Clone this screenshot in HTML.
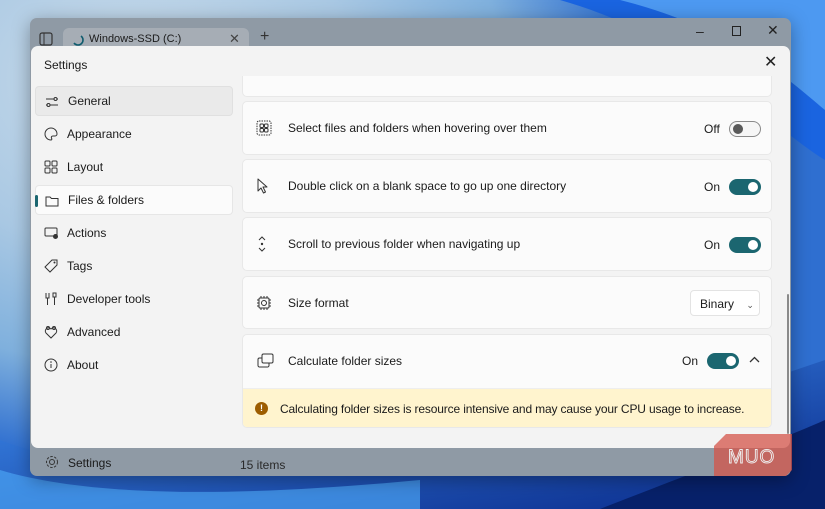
<!DOCTYPE html>
<html><head><meta charset="utf-8"><style>
*{box-sizing:border-box;margin:0;padding:0}
body{width:825px;height:509px;overflow:hidden;position:relative;font-family:"Liberation Sans",sans-serif;
background:radial-gradient(ellipse 500px 380px at 130px 80px,#c9dbea 0%,#a9c8e3 45%,#7fb0dd 75%,#2f6fd0 100%);}
.abs{position:absolute}
.win{left:30px;top:18px;width:761px;height:458px;background:#8f9aa5;border-radius:7px;overflow:hidden;box-shadow:0 4px 18px rgba(0,0,0,.35)}
.dlg{left:31px;top:46px;width:759px;height:402px;background:#f3f3f3;border-radius:7px;overflow:hidden}
.nav{position:absolute;left:4px;width:198px;height:30px;font-size:12px;color:#1b1b1b;display:flex;align-items:center;padding-left:32px;border-radius:4px}
.nav svg{position:absolute;left:9px;top:8px}
.card{position:absolute;left:211px;width:530px;background:#fbfbfb;border:1px solid #e8e8e8;border-radius:5px;font-size:12px;color:#1b1b1b;white-space:nowrap}
.lbl{position:absolute;left:45px;top:50%;transform:translateY(-50%)}
.ic{position:absolute;left:13px;top:50%;transform:translateY(-50%)}
.st{position:absolute;font-size:12px}
.tg{position:absolute;width:32px;height:16px;border-radius:8px;background:#1b6670}
.tg::after{content:"";position:absolute;right:3px;top:3px;width:10px;height:10px;border-radius:50%;background:#fff}
.tg.off{background:#f6f6f6;border:1px solid #8a8a8a}
.tg.off::after{left:3px;right:auto;top:2px;background:#5a5a5a}
</style></head><body>
<svg class="abs" style="left:0;top:0" width="825" height="509">
<defs><linearGradient id="g" x1="0" y1="0" x2="1" y2="1"><stop offset="0" stop-color="#3f8ff0"/><stop offset="1" stop-color="#0a2a8a"/></linearGradient></defs>
<path d="M560 0 C700 40 760 120 825 160 L825 0Z" fill="#1a64e0"/>
<path d="M620 0 C740 30 800 90 825 110 L825 0Z" fill="#5aa6f5" opacity=".8"/>
<path d="M0 509 L0 440 C80 470 200 480 330 470 C500 455 650 420 825 360 L825 509Z" fill="url(#g)"/>
<path d="M0 470 C100 500 260 495 420 480 L420 509 L0 509Z" fill="#4aa2f2" opacity=".7"/>
<path d="M600 509 C700 470 780 440 825 420 L825 509Z" fill="#07216a"/>
</svg>
<div class="abs win">
 <svg class="abs" style="left:9px;top:14px" width="14" height="14"><rect x="1" y="1" width="12" height="12" rx="2" fill="none" stroke="#333" stroke-width="1.2"/><line x1="5" y1="1" x2="5" y2="13" stroke="#333"/></svg>
 <div class="abs" style="left:33px;top:10px;width:186px;height:30px;background:#a6adb5;border-radius:6px 6px 0 0"></div>
 <svg class="abs" style="left:42px;top:16px" width="12" height="12"><path d="M9 2 A5 5 0 1 1 2 9" fill="none" stroke="#0f5c6e" stroke-width="1.6"/></svg>
 <div class="abs" style="left:59px;top:15px;font-size:11px;color:#1b1b1b">Windows-SSD (C:)</div>
 <div class="abs" style="left:199px;top:13px;font-size:13px;color:#444">✕</div>
 <div class="abs" style="left:230px;top:10px;font-size:16px;color:#333">+</div>
 <div class="abs" style="left:666px;top:5px;font-size:14px;color:#222">–</div>
 <div class="abs" style="left:702px;top:8px;width:9px;height:10px;border:1.3px solid #222"></div>
 <div class="abs" style="left:737px;top:4px;font-size:14px;color:#222">✕</div>
 <svg class="abs" style="left:15px;top:437px" width="14" height="14"><circle cx="7" cy="7" r="2.5" fill="none" stroke="#333"/><circle cx="7" cy="7" r="5.5" fill="none" stroke="#333" stroke-dasharray="2.5 1.5"/></svg>
 <div class="abs" style="left:38px;top:438px;font-size:12px;color:#1b1b1b">Settings</div>
 <div class="abs" style="left:210px;top:440px;font-size:12px;color:#2a2a2a">15 items</div>
</div>
<div class="abs dlg">
 <div class="abs" style="left:13px;top:12px;font-size:12px;color:#1b1b1b">Settings</div>
 <div class="abs" style="left:733px;top:6px;font-size:16px;color:#222">✕</div>
 <div class="nav" style="top:40px;background:#eaeaea;border:1px solid #e0e0e0"><svg width="14" height="14"><path d="M1 4h8M12 4h1M1 10h1M5 10h8" stroke="#333"/><circle cx="10.5" cy="4" r="1.5" fill="none" stroke="#333"/><circle cx="3.5" cy="10" r="1.5" fill="none" stroke="#333"/></svg>General</div>
 <div class="nav" style="top:73px"><svg width="14" height="14"><path d="M7 1a6 6 0 1 0 0 12c1 0 1-1 .5-2s0-2 1.5-2h2a2 2 0 0 0 2-2A6 6 0 0 0 7 1z" fill="none" stroke="#333"/></svg>Appearance</div>
 <div class="nav" style="top:106px"><svg width="14" height="14"><rect x="1" y="1" width="5" height="5" rx="1" fill="none" stroke="#333"/><rect x="8" y="1" width="5" height="5" rx="1" fill="none" stroke="#333"/><rect x="1" y="8" width="5" height="5" rx="1" fill="none" stroke="#333"/><rect x="8" y="8" width="5" height="5" rx="1" fill="none" stroke="#333"/></svg>Layout</div>
 <div class="nav" style="top:139px;background:#fbfbfb;border:1px solid #e6e6e6"><span class="abs" style="left:-1px;top:9px;width:3px;height:12px;background:#1b6670;border-radius:2px"></span><svg width="14" height="14"><path d="M1 3h4l1.5 1.5H13V12H1z" fill="none" stroke="#333"/></svg>Files &amp; folders</div>
 <div class="nav" style="top:172px"><svg width="15" height="14"><rect x="1" y="2" width="12" height="8" rx="1" fill="none" stroke="#333"/><circle cx="11.5" cy="10.5" r="2.5" fill="#333"/></svg>Actions</div>
 <div class="nav" style="top:205px"><svg width="14" height="14"><path d="M8 1h5v5l-7 7-5-5z" fill="none" stroke="#333"/><circle cx="10.5" cy="3.5" r="1" fill="#333"/></svg>Tags</div>
 <div class="nav" style="top:238px"><svg width="14" height="14"><path d="M2 1v5h3V1M3.5 6v7M9 1h3v4h-3zM10.5 5v8" fill="none" stroke="#333"/></svg>Developer tools</div>
 <div class="nav" style="top:271px"><svg width="14" height="14"><path d="M7 13L2 8a3 3 0 0 1 5-4 3 3 0 0 1 5 4z" fill="none" stroke="#333"/><circle cx="4" cy="3" r="1.5" fill="none" stroke="#333"/><circle cx="10" cy="3" r="1.5" fill="none" stroke="#333"/></svg>Advanced</div>
 <div class="nav" style="top:304px"><svg width="14" height="14"><circle cx="7" cy="7" r="6" fill="none" stroke="#333"/><path d="M7 6v4" stroke="#333"/><circle cx="7" cy="4" r=".8" fill="#333"/></svg>About</div>

 <div class="card" style="top:30px;height:21px;border-top:none;border-radius:0 0 5px 5px"></div>
 <div class="card" style="top:55px;height:54px">
  <svg class="ic" width="16" height="16"><g fill="none" stroke="#333" stroke-dasharray="1.5 1"><rect x="1" y="1" width="14" height="14" rx="2"/></g><g fill="none" stroke="#333"><rect x="4" y="4" width="3.5" height="3.5" rx="1"/><rect x="8.5" y="4" width="3.5" height="3.5" rx="1"/><rect x="4" y="8.5" width="3.5" height="3.5" rx="1"/><rect x="8.5" y="8.5" width="3.5" height="3.5" rx="1"/></g></svg>
  <span class="lbl">Select files and folders when hovering over them</span>
  <span class="st" style="left:461px;top:20px">Off</span><div class="tg off" style="left:486px;top:19px"></div></div>
 <div class="card" style="top:113px;height:54px">
  <svg class="ic" width="14" height="16"><path d="M2 1v12l3-3 2.5 5 2-1-2.5-5h4z" fill="none" stroke="#333" stroke-linejoin="round"/></svg>
  <span class="lbl">Double click on a blank space to go up one directory</span>
  <span class="st" style="left:461px;top:20px">On</span><div class="tg" style="left:486px;top:19px"></div></div>
 <div class="card" style="top:171px;height:54px">
  <svg class="ic" width="12" height="16"><path d="M3 4l3-3 3 3M3 12l3 3 3-3" fill="none" stroke="#333"/><circle cx="6" cy="8" r="1.2" fill="#333"/></svg>
  <span class="lbl">Scroll to previous folder when navigating up</span>
  <span class="st" style="left:461px;top:20px">On</span><div class="tg" style="left:486px;top:19px"></div></div>
 <div class="card" style="top:230px;height:53px">
  <svg class="ic" width="16" height="16"><rect x="3" y="3" width="10" height="10" rx="1" fill="none" stroke="#333"/><path d="M5 1v2M8 1v2M11 1v2M5 13v2M8 13v2M11 13v2M1 5h2M1 8h2M1 11h2M13 5h2M13 8h2M13 11h2" stroke="#333"/><path d="M5.5 8a2.5 2.5 0 0 1 5 0M10.5 8a2.5 2.5 0 0 1-5 0" fill="none" stroke="#333"/></svg>
  <span class="lbl">Size format</span>
  <div class="abs" style="left:447px;top:13px;width:70px;height:26px;background:#fff;border:1px solid #e3e3e3;border-radius:4px;font-size:12px;padding:6px 0 0 9px">Binary <span style="font-size:9px;color:#555;margin-left:9px">⌄</span></div></div>
 <div class="card" style="top:288px;height:94px;overflow:hidden">
  <svg class="abs" style="left:14px;top:18px" width="17" height="16"><rect x="5" y="1" width="11" height="9" rx="1.5" fill="none" stroke="#333"/><path d="M5 5H2.5A1.5 1.5 0 0 0 1 6.5v6A1.5 1.5 0 0 0 2.5 14h8a1.5 1.5 0 0 0 1.5-1.5V10" fill="none" stroke="#333"/></svg>
  <span class="abs" style="left:45px;top:19px">Calculate folder sizes</span>
  <span class="st" style="left:439px;top:19px">On</span><div class="tg" style="left:464px;top:18px"></div>
  <svg class="abs" style="left:506px;top:21px" width="11" height="8"><path d="M1 6l4.5-4.5L10 6" fill="none" stroke="#333" stroke-width="1.3"/></svg>
  <div class="abs" style="left:0;top:53px;width:530px;height:41px;background:#fff4ce;border-top:1px solid #eee">
   <div class="abs" style="left:12px;top:13px;width:13px;height:13px;border-radius:50%;background:#9d5d00;color:#fff;font-size:9px;font-weight:bold;text-align:center;line-height:13px">!</div>
   <span class="abs" style="left:37px;top:13px;letter-spacing:-0.15px">Calculating folder sizes is resource intensive and may cause your CPU usage to increase.</span></div></div>
 <div class="abs" style="left:756px;top:248px;width:2px;height:140px;background:#8a8a8a;border-radius:1px"></div>
</div>
<svg class="abs" style="left:714px;top:434px" width="80" height="42"><path d="M12 0H78V36L72 42H0V12z" fill="#d4544a" opacity=".75"/><text x="14" y="29" font-family="Liberation Sans" font-size="19" fill="none" stroke="#eee" stroke-width="0.9" letter-spacing="1">MUO</text></svg>
</body></html>
